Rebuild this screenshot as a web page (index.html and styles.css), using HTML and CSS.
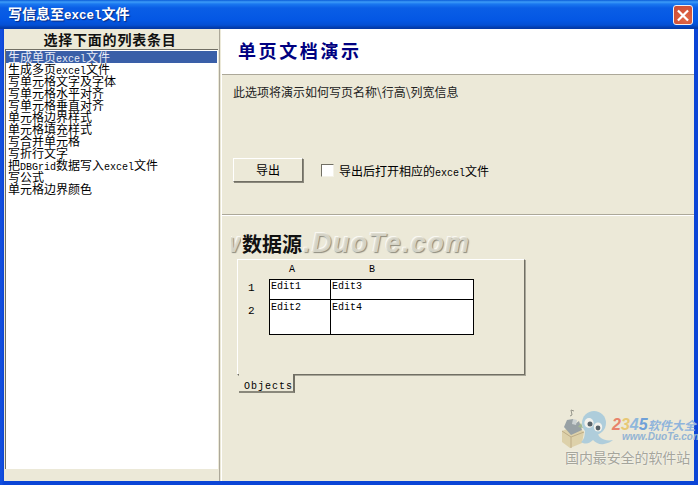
FILE: index.html
```html
<!DOCTYPE html>
<html lang="zh-CN">
<head>
<meta charset="utf-8">
<title>写信息至excel文件</title>
<link rel="stylesheet" href="styles.css">
</head>
<body>
<div class="window">
  <header class="titlebar">
    <div class="title">写信息至<span class="lat-title">excel</span>文件</div>
    <div class="close"><svg width="19" height="19" viewBox="0 0 19 19"><path d="M5 5l9 9M14 5l-9 9" stroke="#fff" stroke-width="2.4" stroke-linecap="square"/></svg></div>
  </header>
  <div class="client">
    <aside class="left">
      <div class="list-head">选择下面的列表条目</div>
      <ul class="list">
        <li class="sel">生成单页<span class="lat">excel</span>文件</li>
        <li>生成多页<span class="lat">excel</span>文件</li>
        <li>写单元格文字及字体</li>
        <li>写单元格水平对齐</li>
        <li>写单元格垂直对齐</li>
        <li>单元格边界样式</li>
        <li>单元格填充样式</li>
        <li>写合并单元格</li>
        <li>写折行文字</li>
        <li>把<span class="lat">DBGrid</span>数据写入<span class="lat">excel</span>文件</li>
        <li>写公式</li>
        <li>单元格边界颜色</li>
      </ul>
    </aside>
    <main class="right">
      <div class="doc-head"><h1>单页文档演示</h1></div>
      <section class="options">
        <p class="desc">此选项将演示如何写页名称\行高\列宽信息</p>
        <div class="actions">
          <div class="btn">导出</div>
          <div class="check"></div>
          <div class="check-label">导出后打开相应的<span class="lat">excel</span>文件</div>
        </div>
      </section>
      <section class="source">
        <h2>数据源</h2>
        <div class="sheet">
          <div class="sheet-body">
            <div class="grid">
              <div></div><div class="col col-a">A</div><div class="col col-b">B</div>
              <div class="rownum r1">1</div>
              <div class="cell lat c-tl">Edit1</div>
              <div class="cell lat c-tr">Edit3</div>
              <div class="rownum r2">2</div>
              <div class="cell lat c-bl">Edit2</div>
              <div class="cell lat c-br">Edit4</div>
            </div>
          </div>
          <div class="tab"><span class="lat">Objects</span></div>
        </div>
      </section>
    </main>
  </div>
  <div class="wm-w">w</div>
  <div class="wm-duote">.DuoTe.com</div>
  <div class="wm-logo">
    <svg class="wm-art" width="62" height="44" viewBox="0 0 62 44">
      <path d="M6 24l14-6 8 7-2 11-12 5-8-6z" fill="#dccfa6"/>
      <path d="M6 24l9 6 13-5M15 30v11" stroke="#b9a67e" fill="none"/>
      <path d="M8 20l3-7 6-1 2 5 4-3 3 9-11 5z" fill="#8f9aa0"/>
      <path d="M17 12l4 1-1 5-4-1z" fill="#c8cfd2"/>
      <path d="M22 20l3-4 2 5z" fill="#9cb48a"/>
      <ellipse cx="38" cy="16" rx="12" ry="12" fill="#a8cbdc"/>
      <path d="M29 22c0 7-1 11-4 13 5 3 9 1 12-2 3 3 7 5 11 4 4-1 7-2 9-4-5 1-9 0-12-2-3-2-4-6-5-10z" fill="#a9cbdc"/>
      <ellipse cx="33" cy="16" rx="4.6" ry="5" fill="#f4f4f0"/><ellipse cx="42" cy="20" rx="4.2" ry="4.6" fill="#f4f4f0"/>
      <circle cx="34" cy="17" r="2.5" fill="#47545e"/><circle cx="42" cy="21" r="2.4" fill="#47545e"/>
      <path d="M15 3l1 5M15 3l3 1M16 8l-2 1" stroke="#8e8e84" fill="none"/>
    </svg>
    <div class="wm-2345"><span class="n1">2</span><span class="n2">3</span><span class="n3">4</span><span class="n4">5</span><span class="wm-cn">软件大全</span></div>
    <div class="wm-url">www.DuoTe.com</div>
    <div class="wm-slogan">国内最安全的软件站</div>
  </div>
</div>
</body>
</html>
```
FILE: styles.css
```css
* { box-sizing: border-box; }
html, body { margin: 0; padding: 0; overflow: hidden; }
body { font-family: "Noto Sans CJK SC", "Liberation Mono", monospace; font-size: 12px; color: #000; background: #0a3fc4; }

.window {
  position: relative;
  width: 698px;
  height: 485px;
  display: flex;
  flex-direction: column;
  background: linear-gradient(90deg, #0a4fdc 0, #1550e0 1px, #0b45d6 4px);
}
.titlebar {
  height: 29px;
  flex: none;
  display: flex;
  align-items: center;
  justify-content: space-between;
  padding: 0 5px 0 8px;
  background: linear-gradient(180deg, #0a5bd8 0, #3d9cf8 2px, #1a78f0 4px, #0a5ee6 8px, #0457e4 20px, #0450d4 25px, #033aa8 28px);
}
.title {
  color: #fff;
  font-size: 14px;
  font-weight: 700;
  line-height: 16px;
  text-shadow: 1px 1px 1px #0a2a80;
}
.lat-title { font-family: "Liberation Mono", monospace; font-size: 12.5px; }
.close {
  width: 20px;
  height: 20px;
  margin-top: 1px;
  border: 1px solid #f4f0f0;
  border-radius: 3px;
  background: radial-gradient(circle at 65% 70%, #e06a48, #d85a3c 40%, #c84a38 100%);
  display: flex;
  align-items: center;
  justify-content: center;
}
.client {
  flex: 1;
  min-height: 0;
  display: flex;
  margin: 0 4px 4px;
  background: #ece9d8;
}
.left {
  width: 216px;
  flex: none;
  padding: 1px 1px 12px 1px;
  border-right: 1px solid #aca899;
  display: flex;
  flex-direction: column;
}
.list-head {
  height: 19px;
  flex: none;
  padding-right: 3px;
  text-align: center;
  font-size: 14px;
  font-weight: 700;
  line-height: 19px;
  letter-spacing: 0.8px;
  color: #111;
}
.list {
  flex: 1;
  margin: 0;
  padding: 1px 0 0 0;
  list-style: none;
  background: #fff;
  border-left: 1px solid #716f64;
  border-top: 1px solid #716f64;
  overflow: hidden;
}
.list li {
  height: 12px;
  line-height: 12px;
  padding-left: 2px;
  white-space: nowrap;
}
.list li.sel { margin-right: 1px; background: #3a5fa8; color: #e8ecf6; }
.lat { font-family: "Liberation Mono", monospace; font-size: 10px; }

.right {
  flex: 1;
  min-width: 0;
  margin-left: 1px;
  border-left: 1px solid #fff;
  display: flex;
  flex-direction: column;
}
.doc-head {
  height: 46px;
  flex: none;
  background: #fff;
  border-bottom: 1px solid #aca899;
  padding: 9px 0 0 16px;
}
.doc-head h1 {
  margin: 0;
  font-size: 18px;
  font-weight: 700;
  line-height: 24px;
  letter-spacing: 2.6px;
  color: #000080;
}
.options {
  height: 140px;
  flex: none;
  padding: 10px 0 0 11px;
  border-bottom: 1px solid #aca899;
  box-shadow: 0 1px 0 #fff;
}
.desc { margin: 0; height: 14px; line-height: 14px; white-space: nowrap; color: #222; }
.actions {
  display: flex;
  align-items: center;
  margin-top: 59px;
}
.btn {
  width: 70px;
  height: 24px;
  line-height: 21px;
  text-align: center;
  background: #ece9d8;
  border: 1px solid;
  border-color: #fff #716f64 #716f64 #fff;
  box-shadow: 1px 1px 0 #8a887c;
}
.check {
  width: 13px;
  height: 13px;
  margin-left: 18px;
  background: #fff;
  border: 1px solid;
  border-color: #716f64 #f4f2e8 #f4f2e8 #716f64;
}
.check-label { margin-left: 5px; white-space: nowrap; }

.source { flex: 1; min-height: 0; padding: 16px 0 0 15px; }
.source h2 {
  margin: 0 0 2px 5px;
  font-size: 20px;
  font-weight: 700;
  line-height: 26px;
  color: #111;
}
.sheet { width: 288px; }
.sheet-body {
  height: 116px;
  border: 1px solid;
  border-color: #fff #716f64 #716f64 #fff;
  box-shadow: 1px 1px 0 #a8a698;
  padding: 0 0 0 8px;
}
.grid {
  display: grid;
  grid-template-columns: 23px 62px 143px;
  grid-template-rows: 19px 21px 35px;
  font-size: 10px;
  line-height: 12px;
}
.col { padding-top: 4px; font-family: "Liberation Mono", monospace; font-size: 10px; }
.col-a { padding-left: 20px; }
.col-b { padding-left: 38px; }
.rownum { font-family: "Liberation Mono", monospace; font-size: 11px; padding-left: 2px; }
.r1 { padding-top: 3px; }
.r2 { padding-top: 5px; }
.cell { background: #fff; border-style: solid; border-color: #000; padding: 1px 0 0 1px; }
.c-tl { border-width: 1px 1px 1px 1px; }
.c-tr { border-width: 1px 1px 1px 0; }
.c-bl { border-width: 0 1px 1px 1px; padding-top: 2px; }
.c-br { border-width: 0 1px 1px 0; padding-top: 2px; }
.tab {
  position: relative;
  width: 56px;
  height: 19px;
  margin: -1px 0 0 2px;
  background: #ece9d8;
  border-right: 2px solid #716f64;
  border-bottom: 2px solid #8a887c;
  padding: 4px 0 0 5px;
  letter-spacing: 1px;
  line-height: 12px;
}

.wm-duote, .wm-w {
  position: absolute;
  top: 225px;
  font-family: "Liberation Sans", sans-serif;
  font-size: 27px;
  font-style: italic;
  font-weight: 700;
  line-height: 36px;
  color: rgba(222, 220, 207, 0.9);
  text-shadow: 1px 1px 1px rgba(125, 123, 112, 0.85), -1px -1px 0 rgba(255, 255, 255, 0.7);
  white-space: nowrap;
  pointer-events: none;
}
.wm-duote { left: 303px; letter-spacing: 1.4px; }
.wm-w { left: 231px; width: 10px; overflow: hidden; text-indent: -12px; }
.wm-logo { position: absolute; left: 556px; top: 405px; width: 140px; height: 64px; pointer-events: none; }
.wm-art { position: absolute; left: 0; top: 2px; opacity: 0.9; }
.wm-2345 {
  position: absolute;
  left: 56px;
  top: 12px;
  font-family: "Liberation Sans", sans-serif;
  font-size: 16px;
  font-style: italic;
  font-weight: 700;
  line-height: 16px;
  color: #8fb4dc;
  white-space: nowrap;
}
.wm-cn { font-family: "Noto Sans CJK SC", sans-serif; font-size: 12px; }
.n1 { color: #e8836c; }
.n2 { color: #e8c874; }
.n3 { color: #8fb8dc; }
.n4 { color: #6fa0d8; }
.wm-url {
  position: absolute;
  left: 66px;
  top: 26px;
  font-family: "Liberation Sans", sans-serif;
  font-size: 10px;
  font-style: italic;
  font-weight: 700;
  line-height: 12px;
  color: #93b4d4;
  white-space: nowrap;
}
.wm-slogan {
  position: absolute;
  left: 9px;
  top: 44px;
  font-size: 14px;
  line-height: 17px;
  letter-spacing: -0.1px;
  color: #a5a59b;
  text-shadow: 0 0 2px #fff;
  white-space: nowrap;
}
```
